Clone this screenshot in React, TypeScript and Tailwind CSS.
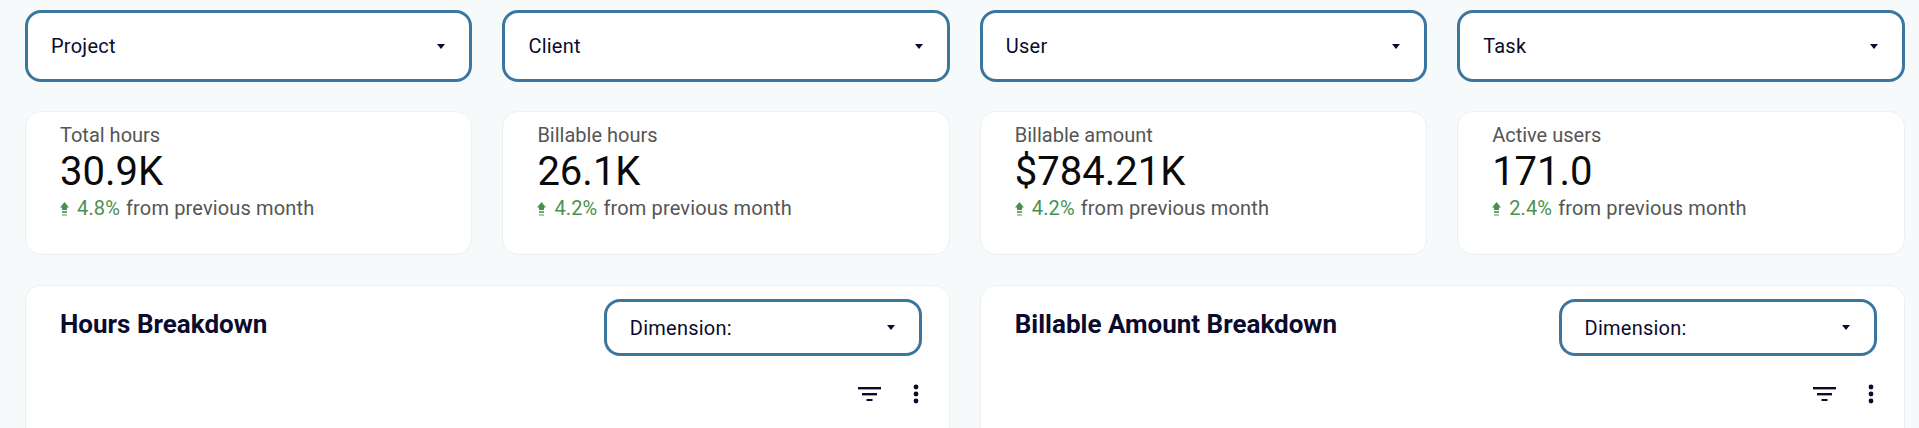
const ink = '#0b0b2e';

function Caret() {
  return (
    <svg width="8" height="5" viewBox="0 0 8 5" className="shrink-0">
      <path d="M0 0h8L4 5z" fill={ink} />
    </svg>
  );
}

function Select({ label, className }: { label: string; className: string }) {
  return (
    <div className={`flex items-center justify-between rounded-[16px] border-[3px] border-[#3b769e] bg-white text-[20px] tracking-[0.25px] text-[#0b0b2e] ${className}`}>
      <span>{label}</span>
      <Caret />
    </div>
  );
}

function UpArrow() {
  return (
    <svg width="9" height="15" viewBox="0 0 9 15" className="mr-[8px] mt-[3px] shrink-0">
      <path d="M4.5 0L9 5.5H7V8H2V5.5H0z" fill="#4a9150" />
      <rect x="2" y="9" width="5" height="2" fill="#6aa76f" />
      <rect x="2" y="12" width="5" height="2" fill="#a5cba8" />
    </svg>
  );
}

function Kpi({ title, value, delta }: { title: string; value: string; delta: string }) {
  return (
    <div className="h-[144px] rounded-[16px] border border-[#edf0f3] bg-white pl-[34px] pt-[10px]">
      <p className="text-[20px] leading-[26px] text-[#555555]">{title}</p>
      <p className="mt-[1px] text-[40px] leading-[46px] text-[#0a0a0a]">{value}</p>
      <div className="flex items-center text-[20px] leading-[26px] tracking-[0.15px] text-[#555555]">
        <UpArrow />
        <span className="text-[#4a9150]">{delta}</span>
        <span className="ml-[6px]">from previous month</span>
      </div>
    </div>
  );
}

function Breakdown({ title }: { title: string }) {
  return (
    <div className="h-[160px] rounded-t-[16px] border border-b-0 border-[#edf0f3] bg-white pl-[34px] pr-[27px] pt-[13px]">
      <div className="flex items-start justify-between">
        <h2 className="pt-[8px] text-[26px] font-bold leading-[34px] text-[#0b0b2e]">{title}</h2>
        <Select label="Dimension:" className="h-[57px] w-[318px] pl-[23px] pr-[24px]" />
      </div>
      <div className="mt-[28px] flex items-center justify-end gap-[32px] pr-[3px]">
        <svg width="23" height="14" viewBox="0 0 23 14">
          <rect x="0" y="0" width="23" height="2.4" fill={ink} />
          <rect x="4" y="6" width="15" height="2.4" fill={ink} />
          <rect x="8.5" y="12" width="6" height="2.4" fill={ink} />
        </svg>
        <svg width="6" height="20" viewBox="0 0 6 20">
          <circle cx="3" cy="3" r="2.4" fill={ink} />
          <circle cx="3" cy="10" r="2.4" fill={ink} />
          <circle cx="3" cy="17" r="2.4" fill={ink} />
        </svg>
      </div>
    </div>
  );
}

export default function App() {
  return (
    <div className="h-[428px] overflow-hidden bg-[#f7fafb] pl-[25px] pr-[14.5px] pt-[10px] font-['Roboto',sans-serif]">
      <div className="grid grid-cols-4 gap-[30px]">
        {['Project', 'Client', 'User', 'Task'].map((label) => (
          <Select key={label} label={label} className="h-[72px] pl-[23px] pr-[24px]" />
        ))}
      </div>
      <div className="mt-[29px] grid grid-cols-4 gap-[30px]">
        <Kpi title="Total hours" value="30.9K" delta="4.8%" />
        <Kpi title="Billable hours" value="26.1K" delta="4.2%" />
        <Kpi title="Billable amount" value="$784.21K" delta="4.2%" />
        <Kpi title="Active users" value="171.0" delta="2.4%" />
      </div>
      <div className="mt-[30px] grid grid-cols-2 gap-[30px]">
        <Breakdown title="Hours Breakdown" />
        <Breakdown title="Billable Amount Breakdown" />
      </div>
    </div>
  );
}
